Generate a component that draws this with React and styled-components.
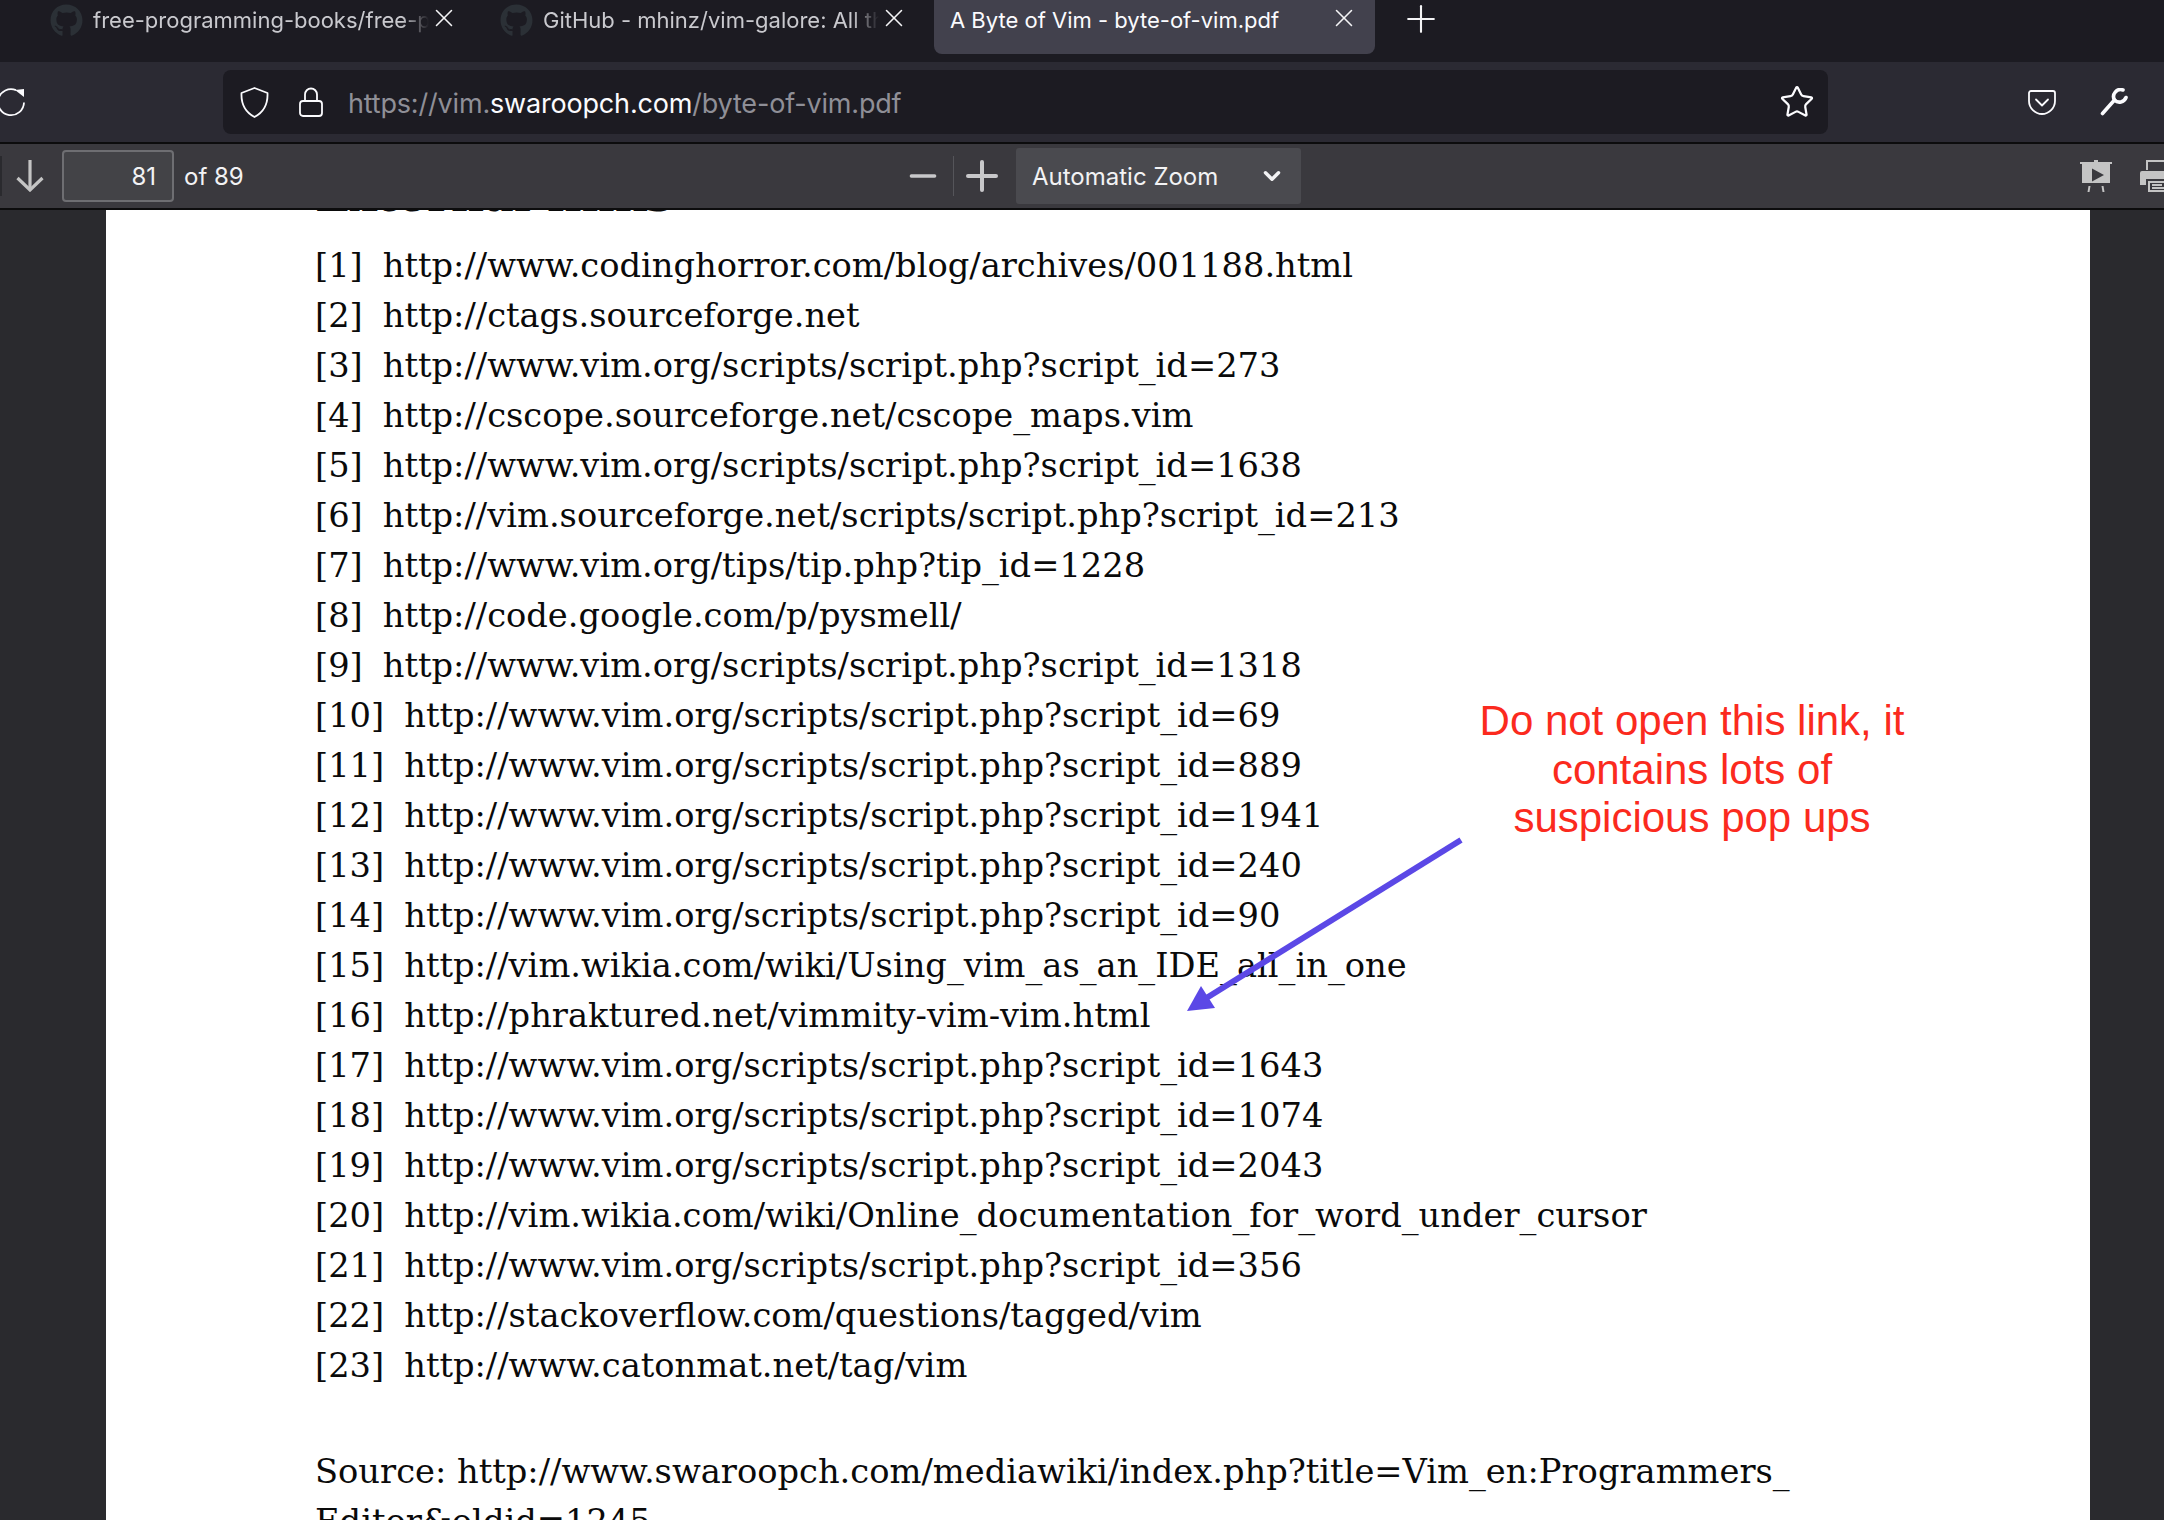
import React from "react";
import styled, { createGlobalStyle } from "styled-components";
import { ChevronDown, Minus, Plus, Star, X } from "lucide-react";
import { FaGithub } from "react-icons/fa";

const GlobalStyle = createGlobalStyle`
  html, body {
    margin: 0;
    padding: 0;
    background: #2a2a2e;
  }
`;

const Window = styled.div`
  width: 2164px;
  height: 1520px;
  overflow: hidden;
  display: flex;
  flex-direction: column;
  font-family: Inter, "Liberation Sans", sans-serif;
`;

const TabBar = styled.div`
  height: 62px;
  background: #1c1b22;
  display: flex;
  align-items: flex-start;
  padding-left: 34px;
  flex-shrink: 0;
`;

const Tab = styled.div`
  width: ${(p) => (p.$active ? "441px" : "450px")};
  height: 54px;
  box-sizing: border-box;
  padding: 0 ${(p) => (p.$active ? "16px" : "25px")} 14px 16px;
  display: flex;
  align-items: center;
  color: ${(p) => (p.$active ? "#fbfbfe" : "#c9c9ce")};
  background: ${(p) => (p.$active ? "#42414d" : "transparent")};
  border-radius: 0 0 8px 8px;
  font-size: 22px;
`;

const Favicon = styled(FaGithub)`
  width: 33px;
  height: 33px;
  color: #2b3036;
  margin-right: 10px;
  flex-shrink: 0;
`;

const TabTitle = styled.span`
  flex: 1;
  min-width: 0;
  white-space: nowrap;
  overflow: hidden;
  ${(p) => !p.$active && "-webkit-mask-image: linear-gradient(to right, #000 92%, transparent 100%);"}
`;

const TabClose = styled(X)`
  width: 30px;
  height: 30px;
  color: #f4f4f6;
  stroke-width: 1.25;
  flex-shrink: 0;
  margin-top: -5px;
`;

const NewTab = styled(Plus)`
  width: 44px;
  height: 44px;
  color: #f4f4f6;
  stroke-width: 1.15;
  margin: -3px 0 0 24px;
`;

const NavBar = styled.div`
  height: 80px;
  background: #2b2a33;
  display: flex;
  align-items: center;
  flex-shrink: 0;
  color: #fbfbfe;
`;

const ReloadIcon = styled.svg`
  width: 32px;
  height: 32px;
  flex-shrink: 0;
  margin-left: -5px;
  margin-right: 196px;
`;

const UrlBar = styled.div`
  width: 1605px;
  height: 64px;
  box-sizing: border-box;
  background: #1c1b22;
  border-radius: 8px;
  display: flex;
  align-items: center;
  padding: 0 13px 0 17px;
`;

const ShieldIcon = styled.svg`
  width: 29px;
  height: 31px;
  margin-right: 30px;
`;

const LockIcon = styled.svg`
  width: 24px;
  height: 30px;
  margin-right: 25px;
`;

const UrlText = styled.div`
  flex: 1;
  padding-top: 2px;
  font-size: 27px;
  color: #8f8f97;
  letter-spacing: -0.18px;
  strong {
    color: #fbfbfe;
    font-weight: 400;
  }
`;

const BookmarkStar = styled(Star)`
  width: 36px;
  height: 36px;
  stroke-width: 1.5;
`;

const NavActions = styled.div`
  display: flex;
  align-items: center;
  margin-left: 200px;
  gap: 44px;
`;

const Rule = styled.div`
  height: 2px;
  background: #0c0c0d;
  flex-shrink: 0;
`;

const PdfToolbar = styled.div`
  height: 64px;
  background: #3a393e;
  display: flex;
  align-items: center;
  flex-shrink: 0;
  color: #f2f2f4;
  font-size: 24px;
`;

const ToolSep = styled.div`
  width: ${(p) => p.$width || 1}px;
  height: 40px;
  background: ${(p) => p.$color || "#55555a"};
  margin: ${(p) => p.$margin || "0"};
`;

const PageDown = styled.svg`
  width: 28px;
  height: 32px;
  margin: 0 18px 0 14px;
`;

const PageInput = styled.div`
  width: 112px;
  height: 52px;
  box-sizing: border-box;
  background: #434347;
  border: 2px solid #6e6e72;
  border-radius: 4px;
  display: flex;
  align-items: center;
  justify-content: flex-end;
  padding-right: 16px;
`;

const PageCount = styled.div`
  margin-left: 10px;
  width: 719px;
`;

const ZoomIcon = styled.span`
  display: flex;
  color: #c8c8ca;
  svg {
    width: ${(p) => p.$size}px;
    height: ${(p) => p.$size}px;
    stroke-width: 2;
  }
`;

const ZoomSelect = styled.div`
  width: 285px;
  height: 56px;
  margin-left: 10px;
  box-sizing: border-box;
  background: #4a4a4f;
  border-radius: 3px;
  display: flex;
  align-items: center;
  justify-content: space-between;
  padding: 0 16px 0 16px;
  svg {
    width: 26px;
    height: 26px;
    stroke-width: 3.2;
  }
`;

const ToolRight = styled.div`
  display: flex;
  align-items: center;
  margin-left: auto;
  margin-right: -8px;
  gap: 28px;
  color: #c4c4c4;
`;

const Viewer = styled.div`
  flex: 1;
  position: relative;
  overflow: hidden;
  background: #2a2a2e;
`;

const Page = styled.div`
  width: 1984px;
  margin-left: 106px;
  box-sizing: border-box;
  height: 1400px;
  background: #fff;
  padding-left: 209px;
  color: #0a0a0a;
  font-family: "DejaVu Serif", serif;
  font-size: 33.7px;
`;

const Heading = styled.h2`
  margin: -43px 0 0;
  height: 74px;
  font-size: 45.6px;
  font-weight: 700;
  line-height: 56px;
  white-space: nowrap;
`;

const RefRow = styled.div`
  display: flex;
  gap: 20px;
  height: 50px;
  line-height: 50px;
  white-space: nowrap;
`;

const Source = styled.div`
  margin-top: 56px;
  line-height: 50px;
  white-space: nowrap;
`;

const Note = styled.div`
  position: absolute;
  left: 1442px;
  top: 487px;
  width: 500px;
  text-align: center;
  color: #fb2a1e;
  font-family: "Liberation Sans", Arial, sans-serif;
  font-size: 42px;
  line-height: 48.5px;
`;

const NoteArrow = styled.svg`
  position: absolute;
  left: 1170px;
  top: 620px;
  width: 310px;
  height: 200px;
`;

const refs = [
  "http://www.codinghorror.com/blog/archives/001188.html",
  "http://ctags.sourceforge.net",
  "http://www.vim.org/scripts/script.php?script_id=273",
  "http://cscope.sourceforge.net/cscope_maps.vim",
  "http://www.vim.org/scripts/script.php?script_id=1638",
  "http://vim.sourceforge.net/scripts/script.php?script_id=213",
  "http://www.vim.org/tips/tip.php?tip_id=1228",
  "http://code.google.com/p/pysmell/",
  "http://www.vim.org/scripts/script.php?script_id=1318",
  "http://www.vim.org/scripts/script.php?script_id=69",
  "http://www.vim.org/scripts/script.php?script_id=889",
  "http://www.vim.org/scripts/script.php?script_id=1941",
  "http://www.vim.org/scripts/script.php?script_id=240",
  "http://www.vim.org/scripts/script.php?script_id=90",
  "http://vim.wikia.com/wiki/Using_vim_as_an_IDE_all_in_one",
  "http://phraktured.net/vimmity-vim-vim.html",
  "http://www.vim.org/scripts/script.php?script_id=1643",
  "http://www.vim.org/scripts/script.php?script_id=1074",
  "http://www.vim.org/scripts/script.php?script_id=2043",
  "http://vim.wikia.com/wiki/Online_documentation_for_word_under_cursor",
  "http://www.vim.org/scripts/script.php?script_id=356",
  "http://stackoverflow.com/questions/tagged/vim",
  "http://www.catonmat.net/tag/vim",
];

const PocketIcon = () => (
  <svg width="28" height="25" viewBox="0 0 28 25" fill="none" stroke="currentColor" strokeWidth="1.8">
    <path d="M3 1h22a2 2 0 0 1 2 2v8c0 7-6 13-13 13S1 18 1 11V3a2 2 0 0 1 2-2z" />
    <path d="M8 9.500l6 6 6-6" strokeLinecap="round" strokeLinejoin="round" />
  </svg>
);

const WrenchIcon = () => (
  <svg width="28" height="28" viewBox="0 0 28 28" fill="none" stroke="currentColor" strokeWidth="3.600" strokeLinecap="round">
    <path d="M23 2A7 7 0 0 0 14.500 12L2.500 25.500" />
    <path d="M14.500 12A7 7 0 0 0 26 9.500" />
  </svg>
);

const PresentationIcon = () => (
  <svg width="32" height="32" viewBox="0 0 32 32" fill="currentColor">
    <rect x="0" y="2" width="32" height="2" />
    <rect x="14" y="0" width="4" height="2" />
    <path d="M2 4h28v19H2z M12 8.500v13l12-6.500z" fillRule="evenodd" />
    <path d="M8.500 26h2l-1 6h-2z M21.500 26h2l1 6h-2z" />
  </svg>
);

const PrinterIcon = () => (
  <svg width="32" height="32" viewBox="0 0 32 32" fill="currentColor">
    <path d="M6 0h22v10h-2V2H8v8H6z" />
    <path d="M2 11h28a2 2 0 0 1 2 2v12h-4v-6H6v6H0V13a2 2 0 0 1 2-2z" />
    <path d="M8 21h20v11H8z M10 23v7h16v-7z" fillRule="evenodd" />
    <path d="M12 24h10v2H12z M12 27h14v2H12z" />
  </svg>
);

const App = () => (
  <Window>
    <GlobalStyle />
    <TabBar>
      <Tab>
        <Favicon />
        <TabTitle>free-programming-books/free-p</TabTitle>
        <TabClose />
      </Tab>
      <Tab>
        <Favicon />
        <TabTitle>GitHub - mhinz/vim-galore: All th</TabTitle>
        <TabClose />
      </Tab>
      <Tab $active>
        <TabTitle $active>A Byte of Vim - byte-of-vim.pdf</TabTitle>
        <TabClose />
      </Tab>
      <NewTab />
    </TabBar>
    <NavBar>
      <ReloadIcon viewBox="0 0 32 32">
        <path d="M21 4.200A13 13 0 1 0 29 16.500" fill="none" stroke="currentColor" strokeWidth="1.800" />
        <path d="M20 4L29 3v8z" fill="currentColor" />
      </ReloadIcon>
      <UrlBar>
        <ShieldIcon viewBox="0 0 29 31" fill="none" stroke="currentColor" strokeWidth="1.800" strokeLinejoin="round">
          <path d="M14.500 1L27.500 6C28 17 24 25 14.500 30 5 25 1 17 1.500 6z" />
        </ShieldIcon>
        <LockIcon viewBox="0 0 24 30" fill="none" stroke="currentColor" strokeWidth="1.800">
          <rect x="1" y="14" width="22" height="15" rx="3" />
          <path d="M6 14V7.500a6 6 0 0 1 12 0V14" />
        </LockIcon>
        <UrlText>https://vim.<strong>swaroopch.com</strong>/byte-of-vim.pdf</UrlText>
        <BookmarkStar />
      </UrlBar>
      <NavActions>
        <PocketIcon />
        <WrenchIcon />
      </NavActions>
    </NavBar>
    <Rule />
    <PdfToolbar>
      <ToolSep $width={2} $color="#2a2a2e" />
      <PageDown viewBox="0 0 28 32" fill="none" stroke="#c4c4c4" strokeWidth="3.200">
        <path d="M14 0V30" />
        <path d="M1.500 18L14 30 26.500 18" />
      </PageDown>
      <PageInput>81</PageInput>
      <PageCount>of 89</PageCount>
      <ZoomIcon $size={40}><Minus /></ZoomIcon>
      <ToolSep $margin="0 4px 0 10px" />
      <ZoomIcon $size={48}><Plus /></ZoomIcon>
      <ZoomSelect>
        Automatic Zoom
        <ChevronDown />
      </ZoomSelect>
      <ToolRight>
        <PresentationIcon />
        <PrinterIcon />
      </ToolRight>
    </PdfToolbar>
    <Rule />
    <Viewer>
      <Page>
        <Heading>External links</Heading>
        {refs.map((url, i) => (
          <RefRow key={url}>
            <span>[{i + 1}]</span>
            <span>{url}</span>
          </RefRow>
        ))}
        <Source>
          Source: http://www.swaroopch.com/mediawiki/index.php?title=Vim_en:Programmers_
          <br />
          Editor&amp;oldid=1245
        </Source>
      </Page>
      <Note>
        Do not open this link, it
        <br />
        contains lots of
        <br />
        suspicious pop ups
      </Note>
      <NoteArrow viewBox="0 0 310 200">
        <path d="M291 10L30 172" stroke="#5b48e6" strokeWidth="6" fill="none" />
        <path d="M17 181L31 156 45 178z" fill="#5b48e6" />
      </NoteArrow>
    </Viewer>
  </Window>
);

export default App;
